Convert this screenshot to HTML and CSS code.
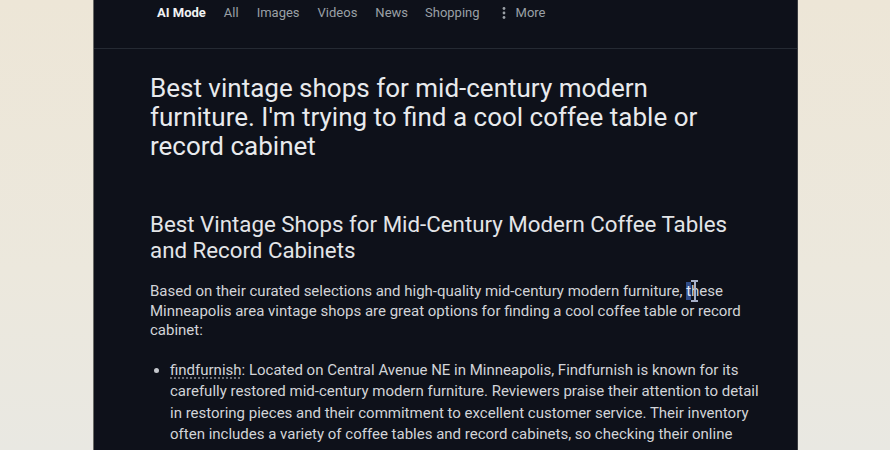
FILE: index.html
```html
<!DOCTYPE html>
<html>
<head>
<meta charset="utf-8">
<link rel="stylesheet" href="styles.css">
</head>
<body>
<div class="stage">
  <main class="panel">
    <nav class="tabs">
      <span class="tab active">AI Mode</span>
      <span class="tab">All</span>
      <span class="tab">Images</span>
      <span class="tab">Videos</span>
      <span class="tab">News</span>
      <span class="tab">Shopping</span>
      <span class="tab more"><svg class="dots" width="4" height="14" viewBox="0 0 4 14"><circle cx="2" cy="2.5" r="1.4"/><circle cx="2" cy="7" r="1.4"/><circle cx="2" cy="11.5" r="1.4"/></svg>More</span>
    </nav>
    <section class="content">
      <h1 class="query">Best vintage shops for mid-century modern furniture. I'm trying to find a cool coffee table or record cabinet</h1>
      <h2 class="answer-title">Best Vintage Shops for Mid-Century Modern Coffee Tables and Record Cabinets</h2>
      <p class="lead">Based on their curated selections and high-quality mid-century modern furniture, <span class="sel-wrap"><span class="sel">t</span><span class="ibeam"></span></span>hese Minneapolis area vintage shops are great options for finding a cool coffee table or record cabinet:</p>
      <ul class="shops">
        <li><span class="shop-link">findfurnish</span>: Located on Central Avenue NE in Minneapolis, Findfurnish is known for its carefully restored mid-century modern furniture. Reviewers praise their attention to detail in restoring pieces and their commitment to excellent customer service. Their inventory often includes a variety of coffee tables and record cabinets, so checking their online store or visiting in person is a good way to find what you need.</li>
      </ul>
    </section>
  </main>
</div>
</body>
</html>
```
FILE: styles.css
```css
html, body {
  margin: 0;
  padding: 0;
  height: 100%;
  overflow: hidden;
}
body {
  background: linear-gradient(180deg, #ede6d7 0%, #ece8dd 60%, #e9e8e2 100%);
  font-family: Roboto, "Liberation Sans", sans-serif;
}
.stage {
  display: flex;
  padding-left: 94px;
  height: 100%;
}
.panel {
  width: 703px;
  background: #0e111a;
  height: 100%;
  box-shadow: 1px 0 0 #3a3c40, -1px 0 0 #6a6a66;
}
.tabs {
  display: flex;
  align-items: center;
  height: 25px;
  padding: 0 0 23px 63px;
  border-bottom: 1px solid #252a33;
  font-size: 13px;
  color: #9aa0a6;
}
.tab {
  display: flex;
  align-items: center;
  white-space: nowrap;
  margin-right: 18px;
}
.tab.active {
  color: #f1f3f4;
  font-weight: 700;
}
.tab:nth-child(5) { margin-right: 17px; }
.tab:nth-child(6) { margin-right: 22px; }
.tab.more {
  gap: 10px;
}
.dots { fill: #9aa0a6; }
.content {
  padding: 0 20px 0 56px;
}
.query {
  margin: 25px 0 0;
  max-width: 580px;
  font-size: 26px;
  line-height: 29px;
  font-weight: 400;
  color: #e8eaed;
}
.answer-title {
  margin: 50px 0 0;
  max-width: 590px;
  font-size: 22.3px;
  line-height: 26px;
  font-weight: 400;
  color: #e3e5e8;
}
.lead {
  margin: 19px 0 0;
  max-width: 600px;
  font-size: 15px;
  line-height: 19.5px;
  color: #d2d4d8;
}
.sel-wrap { position: relative; }
.sel {
  background: #2f4c88;
  color: #dfe6f5;
}
.ibeam {
  position: absolute;
  left: 5px;
  top: -2px;
  width: 7px;
  height: 22px;
  border-top: 2px solid #a6b0c8;
  border-bottom: 2px solid #a6b0c8;
  box-sizing: border-box;
  background: linear-gradient(90deg, transparent 2.5px, #a6b0c8 2.5px, #a6b0c8 4.5px, transparent 4.5px);
}
.shops {
  margin: 19px 0 0;
  padding-left: 20px;
  font-size: 15px;
  line-height: 21.5px;
  color: #d2d4d8;
}
.shops li { max-width: 592px; }
.shops li::marker { color: #c4c7cc; }
.shop-link {
  text-decoration: underline dotted #8a8f96;
  text-underline-offset: 3px;
}
```
